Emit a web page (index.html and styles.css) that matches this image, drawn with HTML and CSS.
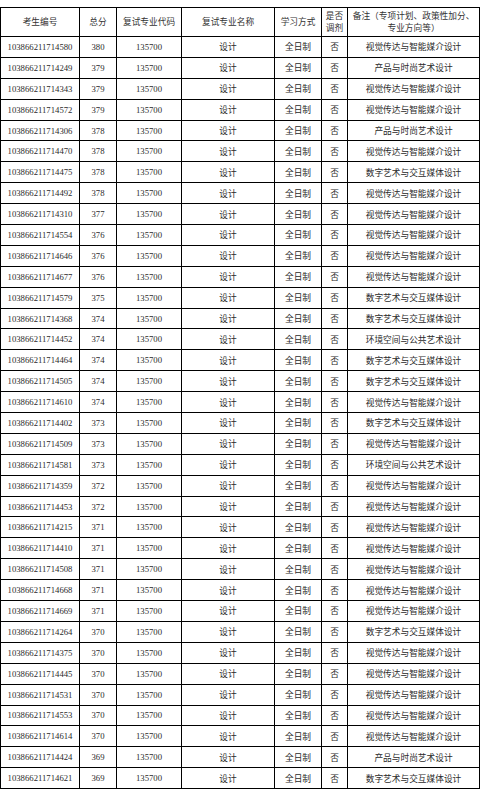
FILE: index.html
```html
<!DOCTYPE html>
<html lang="zh-CN">
<head>
<meta charset="utf-8">
<title>复试名单</title>
<link rel="stylesheet" href="styles.css">
</head>
<body>
<table class="list">
<colgroup>
<col class="c-id"><col class="c-score"><col class="c-code"><col class="c-name"><col class="c-mode"><col class="c-adj"><col class="c-note">
</colgroup>
<thead>
<tr class="head">
<th>考生编号</th><th>总分</th><th>复试专业代码</th><th>复试专业名称</th><th>学习方式</th><th class="adj">是否<br>调剂</th><th class="note">备注（专项计划、政策性加分、专业方向等）</th>
</tr>
</thead>
<tbody>
<tr><td>103866211714580</td><td>380</td><td>135700</td><td>设计</td><td>全日制</td><td>否</td><td>视觉传达与智能媒介设计</td></tr>
<tr><td>103866211714249</td><td>379</td><td>135700</td><td>设计</td><td>全日制</td><td>否</td><td>产品与时尚艺术设计</td></tr>
<tr><td>103866211714343</td><td>379</td><td>135700</td><td>设计</td><td>全日制</td><td>否</td><td>视觉传达与智能媒介设计</td></tr>
<tr><td>103866211714572</td><td>379</td><td>135700</td><td>设计</td><td>全日制</td><td>否</td><td>视觉传达与智能媒介设计</td></tr>
<tr><td>103866211714306</td><td>378</td><td>135700</td><td>设计</td><td>全日制</td><td>否</td><td>产品与时尚艺术设计</td></tr>
<tr><td>103866211714470</td><td>378</td><td>135700</td><td>设计</td><td>全日制</td><td>否</td><td>视觉传达与智能媒介设计</td></tr>
<tr><td>103866211714475</td><td>378</td><td>135700</td><td>设计</td><td>全日制</td><td>否</td><td>数字艺术与交互媒体设计</td></tr>
<tr><td>103866211714492</td><td>378</td><td>135700</td><td>设计</td><td>全日制</td><td>否</td><td>视觉传达与智能媒介设计</td></tr>
<tr><td>103866211714310</td><td>377</td><td>135700</td><td>设计</td><td>全日制</td><td>否</td><td>视觉传达与智能媒介设计</td></tr>
<tr><td>103866211714554</td><td>376</td><td>135700</td><td>设计</td><td>全日制</td><td>否</td><td>视觉传达与智能媒介设计</td></tr>
<tr><td>103866211714646</td><td>376</td><td>135700</td><td>设计</td><td>全日制</td><td>否</td><td>视觉传达与智能媒介设计</td></tr>
<tr><td>103866211714677</td><td>376</td><td>135700</td><td>设计</td><td>全日制</td><td>否</td><td>视觉传达与智能媒介设计</td></tr>
<tr><td>103866211714579</td><td>375</td><td>135700</td><td>设计</td><td>全日制</td><td>否</td><td>数字艺术与交互媒体设计</td></tr>
<tr><td>103866211714368</td><td>374</td><td>135700</td><td>设计</td><td>全日制</td><td>否</td><td>数字艺术与交互媒体设计</td></tr>
<tr><td>103866211714452</td><td>374</td><td>135700</td><td>设计</td><td>全日制</td><td>否</td><td>环境空间与公共艺术设计</td></tr>
<tr><td>103866211714464</td><td>374</td><td>135700</td><td>设计</td><td>全日制</td><td>否</td><td>数字艺术与交互媒体设计</td></tr>
<tr><td>103866211714505</td><td>374</td><td>135700</td><td>设计</td><td>全日制</td><td>否</td><td>数字艺术与交互媒体设计</td></tr>
<tr><td>103866211714610</td><td>374</td><td>135700</td><td>设计</td><td>全日制</td><td>否</td><td>视觉传达与智能媒介设计</td></tr>
<tr><td>103866211714402</td><td>373</td><td>135700</td><td>设计</td><td>全日制</td><td>否</td><td>数字艺术与交互媒体设计</td></tr>
<tr><td>103866211714509</td><td>373</td><td>135700</td><td>设计</td><td>全日制</td><td>否</td><td>视觉传达与智能媒介设计</td></tr>
<tr><td>103866211714581</td><td>373</td><td>135700</td><td>设计</td><td>全日制</td><td>否</td><td>环境空间与公共艺术设计</td></tr>
<tr><td>103866211714359</td><td>372</td><td>135700</td><td>设计</td><td>全日制</td><td>否</td><td>视觉传达与智能媒介设计</td></tr>
<tr><td>103866211714453</td><td>372</td><td>135700</td><td>设计</td><td>全日制</td><td>否</td><td>视觉传达与智能媒介设计</td></tr>
<tr><td>103866211714215</td><td>371</td><td>135700</td><td>设计</td><td>全日制</td><td>否</td><td>视觉传达与智能媒介设计</td></tr>
<tr><td>103866211714410</td><td>371</td><td>135700</td><td>设计</td><td>全日制</td><td>否</td><td>视觉传达与智能媒介设计</td></tr>
<tr><td>103866211714508</td><td>371</td><td>135700</td><td>设计</td><td>全日制</td><td>否</td><td>视觉传达与智能媒介设计</td></tr>
<tr><td>103866211714668</td><td>371</td><td>135700</td><td>设计</td><td>全日制</td><td>否</td><td>视觉传达与智能媒介设计</td></tr>
<tr><td>103866211714669</td><td>371</td><td>135700</td><td>设计</td><td>全日制</td><td>否</td><td>视觉传达与智能媒介设计</td></tr>
<tr><td>103866211714264</td><td>370</td><td>135700</td><td>设计</td><td>全日制</td><td>否</td><td>数字艺术与交互媒体设计</td></tr>
<tr><td>103866211714375</td><td>370</td><td>135700</td><td>设计</td><td>全日制</td><td>否</td><td>视觉传达与智能媒介设计</td></tr>
<tr><td>103866211714445</td><td>370</td><td>135700</td><td>设计</td><td>全日制</td><td>否</td><td>视觉传达与智能媒介设计</td></tr>
<tr><td>103866211714531</td><td>370</td><td>135700</td><td>设计</td><td>全日制</td><td>否</td><td>视觉传达与智能媒介设计</td></tr>
<tr><td>103866211714553</td><td>370</td><td>135700</td><td>设计</td><td>全日制</td><td>否</td><td>视觉传达与智能媒介设计</td></tr>
<tr><td>103866211714614</td><td>370</td><td>135700</td><td>设计</td><td>全日制</td><td>否</td><td>视觉传达与智能媒介设计</td></tr>
<tr><td>103866211714424</td><td>369</td><td>135700</td><td>设计</td><td>全日制</td><td>否</td><td>产品与时尚艺术设计</td></tr>
<tr><td>103866211714621</td><td>369</td><td>135700</td><td>设计</td><td>全日制</td><td>否</td><td>数字艺术与交互媒体设计</td></tr>
</tbody>
</table>
</body>
</html>
```
FILE: styles.css
```css
html, body {
  margin: 0;
  padding: 0;
  background: #ffffff;
}

body {
  padding-top: 7px;
  font-family: "Liberation Serif", "Noto Sans CJK SC", serif;
  font-size: 8.7px;
  color: #2a2a2a;
}

.list {
  border-collapse: collapse;
  table-layout: fixed;
  width: 479px;
  margin: 0;
}

.c-id { width: 79px; }
.c-score { width: 37px; }
.c-code { width: 65px; }
.c-name { width: 93px; }
.c-mode { width: 47px; }
.c-adj { width: 26px; }
.c-note { width: 132px; }

.list th,
.list td {
  border: 1px solid #000;
  padding: 0;
  text-align: center;
  vertical-align: middle;
  font-weight: normal;
  white-space: nowrap;
  overflow: hidden;
}

.list tbody tr {
  height: 20.9px;
}

.list .head {
  height: 29px;
}

.list th {
  line-height: 12.5px;
  color: #333;
}

.list th.note {
  white-space: normal;
  padding: 0 2px;
}
```
